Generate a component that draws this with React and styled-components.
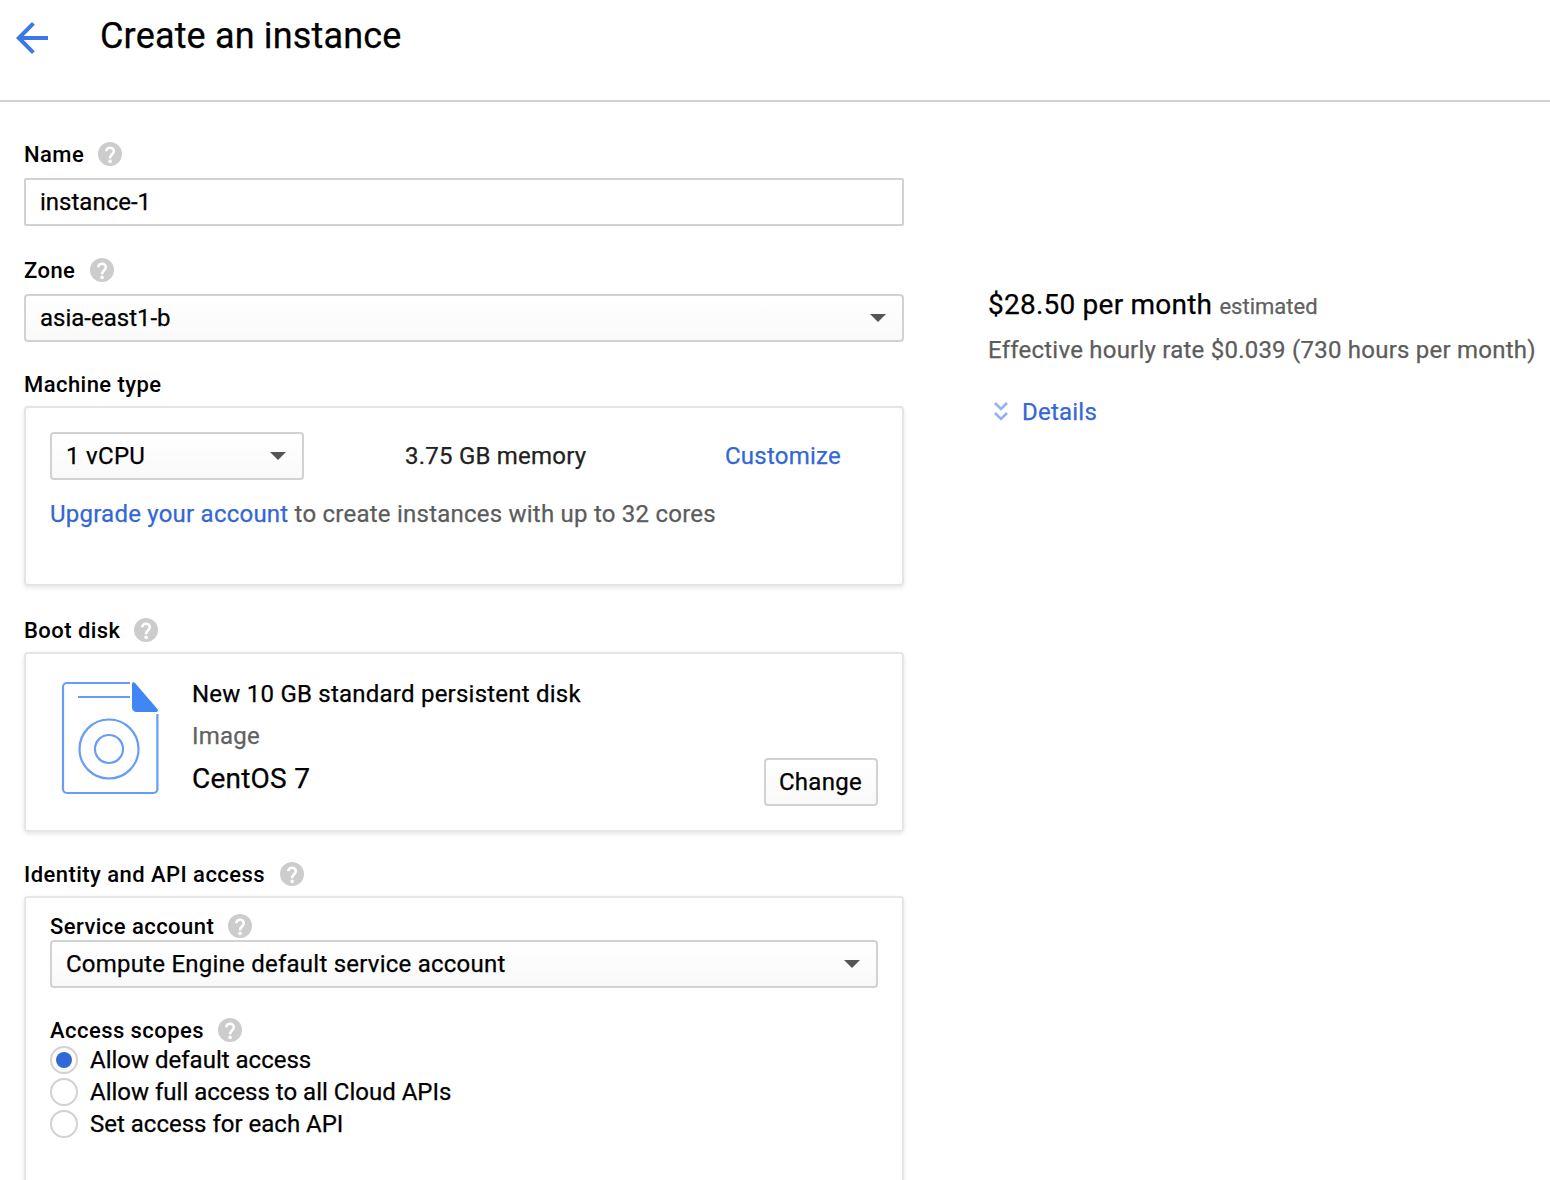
import React, { useState } from 'react';
import styled, { createGlobalStyle } from 'styled-components';

const GlobalStyle = createGlobalStyle`
  *, *::before, *::after { box-sizing: border-box; }
  html, body { margin: 0; background: #fff; }
  body {
    height: 1180px;
    overflow: hidden;
    font-family: Roboto, sans-serif;
    font-size: 24px;
    color: #000;
    -webkit-text-stroke: 0.25px;
  }
`;

const Page = styled.div`
  width: 1550px;
  height: 1180px;
  overflow: hidden;
`;

const Header = styled.header`
  display: flex;
  align-items: flex-start;
  height: 102px;
  padding: 14px 8px 0;
  border-bottom: 2px solid #d2d2d2;
`;

const BackIcon = styled.svg`
  width: 48px;
  height: 48px;
  margin-right: 44px;
  fill: #3b78e7;
`;

const Title = styled.h1`
  margin: 0;
  font-size: 36px;
  font-weight: 400;
  line-height: 44px;
  letter-spacing: 0.17px;
`;

const Body = styled.main`
  display: flex;
  align-items: flex-start;
`;

const Form = styled.form`
  width: 880px;
  margin: 40px 0 0 24px;
`;

const Field = styled.section`
  margin-bottom: ${(p) => p.$after || 0}px;
`;

const Label = styled.div`
  display: flex;
  align-items: center;
  gap: ${(p) => p.$gap || 14}px;
  height: 24px;
  margin-bottom: ${(p) => p.$after || 0}px;
  font-size: 22px;
  font-weight: 500;
  line-height: 24px;
  letter-spacing: 0.45px;
  white-space: nowrap;
  -webkit-text-stroke: 0;
`;

const LabelText = styled.span`
  padding-top: 2px;
`;

const HelpSvg = styled.svg`
  width: 24px;
  height: 24px;
`;

const TextInput = styled.input`
  display: block;
  width: 100%;
  height: 48px;
  padding: 0 14px;
  border: 2px solid #d2d2d2;
  border-radius: 2px;
  outline: none;
  font: inherit;
  color: inherit;
  background: #fff;
`;

const SelectBox = styled.button`
  display: flex;
  align-items: center;
  justify-content: space-between;
  width: ${(p) => p.$width || '100%'};
  height: 48px;
  padding: 0 16px 0 14px;
  border: 2px solid #d2d2d2;
  border-radius: 4px;
  font: inherit;
  color: inherit;
  letter-spacing: ${(p) => p.$track || '0'};
  background: linear-gradient(#fff, #f9f9f9);
`;

const Caret = styled.span`
  border: 8px solid transparent;
  border-top-color: #555;
  border-bottom: 0;
`;

const Card = styled.div`
  height: ${(p) => p.$height}px;
  padding: ${(p) => p.$top}px 24px 0;
  border: 2px solid #e5e5e5;
  border-radius: 4px;
  box-shadow: 0 2px 5px rgba(0, 0, 0, 0.1);
`;

const MachineRow = styled.div`
  display: grid;
  grid-template-columns: 355px 320px auto;
  align-items: center;
  margin-bottom: 20px;
  letter-spacing: 0.23px;
`;

const Link = styled.a`
  color: #3367d6;
`;

const Memory = styled.span`
  color: #212121;
`;

const Note = styled.p`
  margin: 0;
  line-height: 28px;
  letter-spacing: 0.23px;
  color: #5c5c5c;
  white-space: nowrap;
`;

const DiskRow = styled.div`
  display: flex;
  height: 128px;
  letter-spacing: 0.23px;
`;

const DiskSvg = styled.svg`
  width: 98px;
  height: 114px;
  margin: 3px 33px 0 11px;
`;

const DiskInfo = styled.div`
  flex: 1;
`;

const DiskLine = styled.div`
  height: 42px;
  font-size: ${(p) => p.$size || 24}px;
  line-height: ${(p) => p.$line || 32}px;
  color: ${(p) => p.$color || '#000'};
`;

const ChangeButton = styled.button`
  align-self: flex-end;
  width: 114px;
  height: 48px;
  padding: 0 1px 0 0;
  border: 2px solid #d2d2d2;
  border-radius: 4px;
  font: inherit;
  letter-spacing: 0.3px;
  color: inherit;
  background: linear-gradient(#fff, #f9f9f9);
`;

const RadioRow = styled.label`
  display: flex;
  align-items: center;
  height: 32px;
`;

const Radio = styled.input`
  appearance: none;
  display: grid;
  place-items: center;
  width: 28px;
  height: 28px;
  margin: 0 12px 0 0;
  border: 2px solid #d2d2d2;
  border-radius: 50%;

  &:checked::before {
    content: '';
    width: 16px;
    height: 16px;
    border-radius: 50%;
    background: #3367d6;
  }
`;

const Estimate = styled.aside`
  margin: 182px 0 0 84px;
  letter-spacing: 0.23px;
  white-space: nowrap;
`;

const Price = styled.div`
  height: 40px;
  font-size: 28px;
  line-height: 42px;
`;

const Estimated = styled.span`
  font-size: 22px;
  letter-spacing: 0;
  color: #616161;
`;

const Rate = styled.div`
  margin-top: 8px;
  line-height: 36px;
  color: #5c5c5c;
`;

const Details = styled.div`
  display: flex;
  align-items: center;
  height: 32px;
  margin-top: 28px;
`;

const ChevronSvg = styled.svg`
  width: 16px;
  height: 20px;
  margin: 0 13px 3px 5px;
  fill: none;
  stroke: #94b2ee;
  stroke-width: 2.6;
`;

const Help = () => (
  <HelpSvg viewBox="0 0 24 24" aria-hidden="true">
    <circle cx="12" cy="12" r="12" fill="#ccc" />
    <path d="M8.3 9.3a3.750 3.500 0 0 1 7.500 0c0 2.900-3.700 3.100-3.700 6.900" fill="none" stroke="#fff" strokeWidth="2.600" />
    <circle cx="12.100" cy="19.400" r="1.800" fill="#fff" />
  </HelpSvg>
);

const FieldLabel = ({ children, after, gap, help = true }) => (
  <Label $after={after} $gap={gap}>
    <LabelText>{children}</LabelText>
    {help && <Help />}
  </Label>
);

const DiskIcon = () => (
  <DiskSvg viewBox="61 681 98 114" aria-hidden="true">
    <g fill="none" stroke="#669df6" strokeWidth="2.2">
      <path d="M130 683H67a4 4 0 0 0-4 4v102a4 4 0 0 0 4 4h86.400a4 4 0 0 0 4-4V714" />
      <path d="M78 697h52" />
      <circle cx="109" cy="749" r="29.500" />
      <circle cx="109" cy="749" r="14" />
    </g>
    <path fill="#4285f4" d="M132 684c0-1.700 1.800-2.300 3-1.100l22.400 26.200c1 1.300.4 2.900-1.300 2.900H136.500a4.500 4.500 0 0 1-4.500-4.500z" />
  </DiskSvg>
);

const Select = ({ children, ...rest }) => (
  <SelectBox type="button" {...rest}>
    {children}
    <Caret />
  </SelectBox>
);

const SCOPES = ['Allow default access', 'Allow full access to all Cloud APIs', 'Set access for each API'];

export default function App() {
  const [scope, setScope] = useState(0);
  const [name, setName] = useState('instance-1');

  return (
    <Page>
      <GlobalStyle />
      <Header>
        <BackIcon viewBox="0 0 24 24" aria-hidden="true">
          <path d="M20 11H7.83l5.59-5.59L12 4l-8 8 8 8 1.410-1.410L7.830 13H20v-2z" />
        </BackIcon>
        <Title>Create an instance</Title>
      </Header>
      <Body>
        <Form>
          <Field $after={32}>
            <FieldLabel after={12}>Name</FieldLabel>
            <TextInput value={name} spellCheck={false} onChange={(e) => setName(e.target.value)} />
          </Field>
          <Field $after={30}>
            <FieldLabel after={12} gap={14.6}>Zone</FieldLabel>
            <Select>asia-east1-b</Select>
          </Field>
          <Field $after={32}>
            <FieldLabel after={10} help={false}>Machine type</FieldLabel>
            <Card $height={180} $top={24}>
              <MachineRow>
                <Select $width="254px" $track="0.3px">1 vCPU</Select>
                <Memory>3.75 GB memory</Memory>
                <Link>Customize</Link>
              </MachineRow>
              <Note><Link>Upgrade your account</Link> to create instances with up to 32 cores</Note>
            </Card>
          </Field>
          <Field $after={30}>
            <FieldLabel after={10} gap={13.4}>Boot disk</FieldLabel>
            <Card $height={180} $top={24}>
              <DiskRow>
                <DiskIcon />
                <DiskInfo>
                  <DiskLine>New 10 GB standard persistent disk</DiskLine>
                  <DiskLine $color="#616161">Image</DiskLine>
                  <DiskLine $size={28} $line={34}>CentOS 7</DiskLine>
                </DiskInfo>
                <ChangeButton type="button">Change</ChangeButton>
              </DiskRow>
            </Card>
          </Field>
          <Field>
            <FieldLabel after={10} gap={14.6}>Identity and API access</FieldLabel>
            <Card $height={320} $top={16}>
              <Field $after={30}>
                <FieldLabel after={2}>Service account</FieldLabel>
                <Select $track="0.235px">Compute Engine default service account</Select>
              </Field>
              <FieldLabel after={2}>Access scopes</FieldLabel>
              {SCOPES.map((text, i) => (
                <RadioRow key={text}>
                  <Radio type="radio" name="scope" checked={scope === i} onChange={() => setScope(i)} />
                  {text}
                </RadioRow>
              ))}
            </Card>
          </Field>
        </Form>
        <Estimate>
          <Price>$28.50 per month <Estimated>estimated</Estimated></Price>
          <Rate>Effective hourly rate $0.039 (730 hours per month)</Rate>
          <Details>
            <ChevronSvg viewBox="0 0 16 20" aria-hidden="true">
              <path d="M2 2l6 6 6-6M2 12l6 6 6-6" />
            </ChevronSvg>
            <Link>Details</Link>
          </Details>
        </Estimate>
      </Body>
    </Page>
  );
}
